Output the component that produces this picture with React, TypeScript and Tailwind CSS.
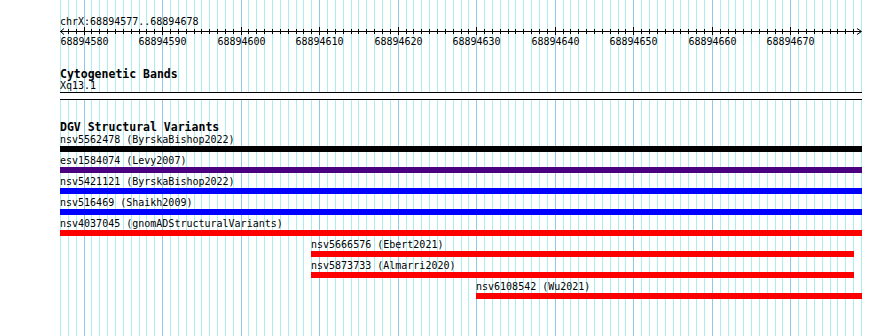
import React from "react"

// view window: chrX:68894577..68894678 drawn over 801px starting at x=60
const LEFT = 60
const SPAN = 801
const BASES = 102
const FIRST = 68894577

const bx = (i: number) => Math.round(LEFT + (i * SPAN) / BASES)

type Variant = { label: string; start: number; end: number; color: string }

const variants: Variant[] = [
  { label: "nsv5562478 (ByrskaBishop2022)", start: 0, end: 102, color: "bg-black" },
  { label: "esv1584074 (Levy2007)", start: 0, end: 102, color: "bg-[#4b0082]" },
  { label: "nsv5421121 (ByrskaBishop2022)", start: 0, end: 102, color: "bg-[#0000ff]" },
  { label: "nsv516469 (Shaikh2009)", start: 0, end: 102, color: "bg-[#0000ff]" },
  { label: "nsv4037045 (gnomADStructuralVariants)", start: 0, end: 102, color: "bg-[#ff0000]" },
  { label: "nsv5666576 (Ebert2021)", start: 32, end: 101, color: "bg-[#ff0000]" },
  { label: "nsv5873733 (Almarri2020)", start: 32, end: 101, color: "bg-[#ff0000]" },
  { label: "nsv6108542 (Wu2021)", start: 53, end: 102, color: "bg-[#ff0000]" },
]

const lines = Array.from({ length: BASES + 1 }, (_, i) => i)
const isMajor = (i: number) => (FIRST + i) % 10 === 0

function Grid() {
  return (
    <svg className="absolute inset-0 pointer-events-none" width={890} height={336} shapeRendering="crispEdges">
      {lines.map((i) => (
        <line
          key={i}
          x1={bx(i) + 0.5}
          x2={bx(i) + 0.5}
          y1={0}
          y2={336}
          stroke={isMajor(i) ? "#8ecbe8" : "#aaeef0"}
          strokeWidth={1}
        />
      ))}
    </svg>
  )
}

function Ruler() {
  const majors = lines.filter((i) => isMajor(i))
  return (
    <div className="pt-[15px]">
      <div className="h-[12px] pl-[60px] text-[10px] leading-[13px]">chrX:68894577..68894678</div>
      <svg width={890} height={8} className="block overflow-visible">
        <line x1={LEFT} x2={bx(BASES)} y1={4.5} y2={4.5} stroke="#000" strokeWidth={1} />
        <polyline points={`${LEFT + 4},1.5 ${LEFT + 0.5},4.5 ${LEFT + 4},7.5`} fill="none" stroke="#000" strokeWidth={1} />
        <polyline
          points={`${bx(BASES) - 4},1.5 ${bx(BASES) + 0.5},4.5 ${bx(BASES) - 4},7.5`}
          fill="none"
          stroke="#000"
          strokeWidth={1}
        />
        {lines.slice(1, BASES).map((i) => (
          <line
            key={i}
            x1={bx(i) + 0.5}
            x2={bx(i) + 0.5}
            y1={isMajor(i) ? 0 : 2}
            y2={isMajor(i) ? 8 : 7}
            stroke="#000"
            strokeWidth={1}
            shapeRendering="crispEdges"
          />
        ))}
      </svg>
      <div className="relative h-[12px] text-[10px] leading-[13px]">
        {majors.map((i) => (
          <span key={i} className="absolute top-0 -translate-x-1/2" style={{ left: bx(i) + 0.5 }}>
            {FIRST + i}
          </span>
        ))}
      </div>
    </div>
  )
}

export default function App() {
  return (
    <div className="relative w-[890px] h-[336px] overflow-hidden bg-white text-black font-['DejaVu_Sans_Mono',monospace]">
      <Grid />
      <div className="relative">
        <Ruler />

        {/* Cytogenetic Bands */}
        <div className="mt-[20px] pl-[60px]">
          <div className="h-[12px] text-[11.5px] leading-[14px] font-bold">Cytogenetic Bands</div>
          <div className="h-[12px] text-[10px] leading-[14px]">Xq13.1</div>
        </div>

        <div className="ml-[60px] w-[802px] h-[8px] mt-px border-y border-black bg-white" />

        {/* DGV Structural Variants */}
        <div className="mt-[22px]">
          <div className="h-[12px] pl-[60px] text-[11.5px] leading-[11px] font-bold">DGV Structural Variants</div>
          {variants.map((v) => (
            <div key={v.label} className="h-[21px] text-[10px]">
              <div className="h-[12px] leading-[11px]" style={{ marginLeft: bx(v.start) }}>
                {v.label}
              </div>
              <div
                className={`h-[6px] ${v.color}`}
                style={{ marginLeft: bx(v.start), width: bx(v.end) - bx(v.start) + 1 }}
              />
            </div>
          ))}
        </div>
      </div>
    </div>
  )
}
